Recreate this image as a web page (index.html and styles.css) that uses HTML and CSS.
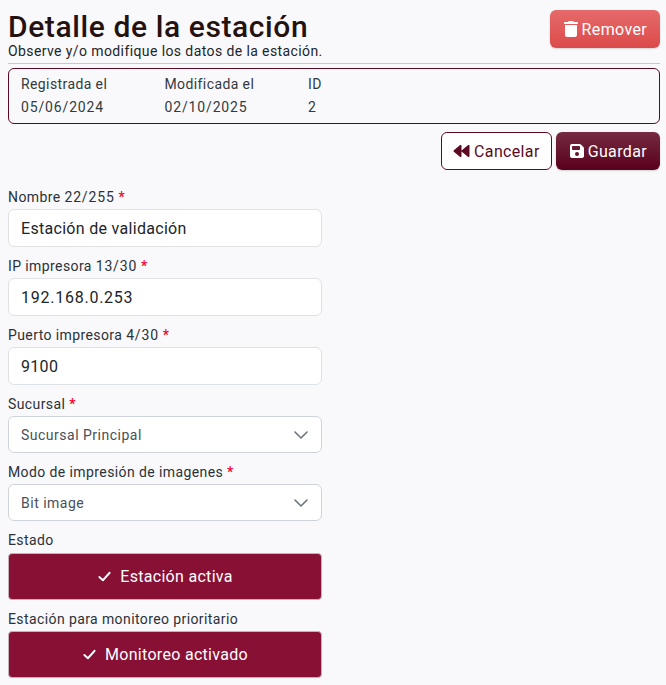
FILE: index.html
```html
<!DOCTYPE html>
<html lang="es">
<head>
  <meta charset="UTF-8">
  <meta name="viewport" content="width=device-width, initial-scale=1.0">
  <title>Detalle de la estación</title>
  <link rel="stylesheet" href="styles.css">
</head>
<body>
  <header class="page-header">
    <div>
      <h1>Detalle de la estación</h1>
      <p class="subtitle">Observe y/o modifique los datos de la estación.</p>
    </div>
    <button class="btn btn-danger">
      <svg class="icon" viewBox="0 0 448 512"><path fill="currentColor" d="M135 18C140 7 151 0 163 0h122c12 0 23 7 28 18l7 14h96c18 0 32 14 32 32s-14 32-32 32H32C14 96 0 82 0 64s14-32 32-32h96l7-14zM32 128h384v320c0 35-29 64-64 64H96c-35 0-64-29-64-64V128z"/></svg>
      Remover
    </button>
  </header>

  <section class="meta">
    <div class="meta-item"><span>Registrada el</span><span class="digits">05/06/2024</span></div>
    <div class="meta-item"><span>Modificada el</span><span class="digits">02/10/2025</span></div>
    <div class="meta-item"><span>ID</span><span>2</span></div>
  </section>

  <div class="actions">
    <button class="btn btn-outline">
      <svg class="icon icon-wide" viewBox="0 0 512 512"><path fill="currentColor" d="M11 231L203 71c9-8 23-10 35-5s18 17 18 29v322c0 12-7 24-18 29s-26 3-35-5L11 281c-7-6-11-15-11-25s4-19 11-25zm256 0L459 71c9-8 23-10 35-5s18 17 18 29v322c0 12-7 24-18 29s-26 3-35-5L267 281c-7-6-11-15-11-25s4-19 11-25z"/></svg>
      Cancelar
    </button>
    <button class="btn btn-primary">
      <svg class="icon" viewBox="0 0 448 512"><path fill="currentColor" d="M64 32C29 32 0 61 0 96v320c0 35 29 64 64 64h320c35 0 64-29 64-64V173c0-17-7-33-19-45l-74-74c-12-12-28-19-45-19H64zm0 96c0-18 14-32 32-32h192c18 0 32 14 32 32v64c0 18-14 32-32 32H96c-18 0-32-14-32-32v-64zm160 160a64 64 0 1 1 0 128 64 64 0 1 1 0-128z"/></svg>
      Guardar
    </button>
  </div>

  <form class="form">
    <div class="field">
      <label>Nombre <span class="digits">22/255</span> <b>*</b></label>
      <div class="input">Estación de validación</div>
    </div>
    <div class="field">
      <label>IP impresora <span class="digits">13/30</span> <b>*</b></label>
      <div class="input digits">192.168.0.253</div>
    </div>
    <div class="field">
      <label>Puerto impresora <span class="digits">4/30</span> <b>*</b></label>
      <div class="input">9100</div>
    </div>
    <div class="field">
      <label>Sucursal <b>*</b></label>
      <div class="select">Sucursal Principal
        <svg class="chevron" viewBox="0 0 16 16"><path fill="none" stroke="currentColor" stroke-width="1.6" stroke-linecap="round" stroke-linejoin="round" d="M2 5l6 6 6-6"/></svg>
      </div>
    </div>
    <div class="field">
      <label>Modo de impresión de imagenes <b>*</b></label>
      <div class="select">Bit image
        <svg class="chevron" viewBox="0 0 16 16"><path fill="none" stroke="currentColor" stroke-width="1.6" stroke-linecap="round" stroke-linejoin="round" d="M2 5l6 6 6-6"/></svg>
      </div>
    </div>
    <div class="field field-state">
      <label>Estado</label>
      <div class="toggle">
        <svg class="check" viewBox="0 0 16 16"><path fill="none" stroke="currentColor" stroke-width="2" stroke-linecap="round" stroke-linejoin="round" d="M2.5 8.5l3.8 3.5 7.2-8"/></svg>
        Estación activa
      </div>
    </div>
    <div class="field">
      <label>Estación para monitoreo prioritario</label>
      <div class="toggle">
        <svg class="check" viewBox="0 0 16 16"><path fill="none" stroke="currentColor" stroke-width="2" stroke-linecap="round" stroke-linejoin="round" d="M2.5 8.5l3.8 3.5 7.2-8"/></svg>
        Monitoreo activado
      </div>
    </div>
  </form>
</body>
</html>
```

FILE: styles.css
```css
body {
  margin: 0;
  padding: 10px 6px 0 8px;
  background: #f9f9fb;
  color: #212529;
  font-family: Roboto, Arial, sans-serif;
  font-size: 14px;
  letter-spacing: 0.4px;
}

.page-header {
  display: flex;
  justify-content: space-between;
  align-items: flex-start;
  height: 53px;
  border-bottom: 1px solid #c8c8c8;
}

h1 {
  margin: 0;
  font-size: 30px;
  line-height: 34px;
  font-weight: 500;
  color: #23120f;
  letter-spacing: 0.6px;
}

.subtitle {
  margin: -1px 0 0;
  font-size: 14px;
  line-height: 16px;
}

.digits {
  letter-spacing: 0.85px;
}

.btn {
  display: inline-flex;
  align-items: center;
  justify-content: center;
  gap: 4px;
  height: 38px;
  padding: 0 13px 0 14px;
  border-radius: 6px;
  font-family: Roboto, Arial, sans-serif;
  font-size: 16px;
  letter-spacing: 0.35px;
  cursor: pointer;
}

.icon {
  width: 14px;
  height: 16px;
}

.icon-wide {
  width: 17px;
}

.btn-danger {
  border: 0;
  background: linear-gradient(#e66a6a, #dc4a4a);
  color: #fff;
  box-shadow: 0 1px 2px rgba(0, 0, 0, 0.15);
}

.btn-outline {
  padding: 0 11px;
  border: 1px solid #5c0a24;
  background: #fff;
  color: #5c0a24;
}

.btn-primary {
  border: 0;
  background: linear-gradient(#752b41, #59001c);
  color: #fff;
  box-shadow: 0 1px 2px rgba(0, 0, 0, 0.15);
}

.meta {
  display: flex;
  margin-top: 4px;
  height: 54px;
  padding: 0 12px;
  align-items: center;
  border: 1px solid #5c0a24;
  border-radius: 6px;
  color: #343a40;
}

.meta-item {
  display: flex;
  flex-direction: column;
  gap: 6px;
  width: 143.5px;
  line-height: 17px;
}

.actions {
  display: flex;
  justify-content: flex-end;
  gap: 4px;
  margin-top: 8px;
}

.form {
  display: flex;
  flex-direction: column;
  gap: 10px;
  width: 314px;
  margin-top: 18px;
}

.field label {
  display: block;
  line-height: 17px;
  padding-top: 1px;
  margin-bottom: 3px;
  color: #2b3138;
}

.field-state {
  margin-top: 1px;
}

.field-state label {
  padding-top: 0;
  margin-bottom: 4px;
}

.field b {
  color: #f5001e;
  font-weight: 500;
}

.input,
.select {
  box-sizing: border-box;
  display: flex;
  align-items: center;
  height: 38px;
  padding: 0 12px;
  background: #fff;
  border: 1px solid #dee2e6;
  border-radius: 6px;
  font-size: 16px;
  letter-spacing: 0.3px;
}

.input.digits {
  letter-spacing: 0.75px;
}

.select {
  position: relative;
  height: 37px;
  font-size: 14px;
  letter-spacing: 0.5px;
  color: #495057;
  border-color: #ced4da;
}

.chevron {
  position: absolute;
  right: 12px;
  top: 10px;
  width: 16px;
  height: 16px;
  color: #6c757d;
}

.toggle {
  box-sizing: border-box;
  display: flex;
  align-items: center;
  justify-content: center;
  gap: 8px;
  height: 47px;
  background: #881035;
  border: 1px solid #c8b0b8;
  border-radius: 4px;
  color: #fff;
  font-size: 16px;
  letter-spacing: 0.3px;
}

.check {
  width: 15px;
  height: 15px;
}
```
